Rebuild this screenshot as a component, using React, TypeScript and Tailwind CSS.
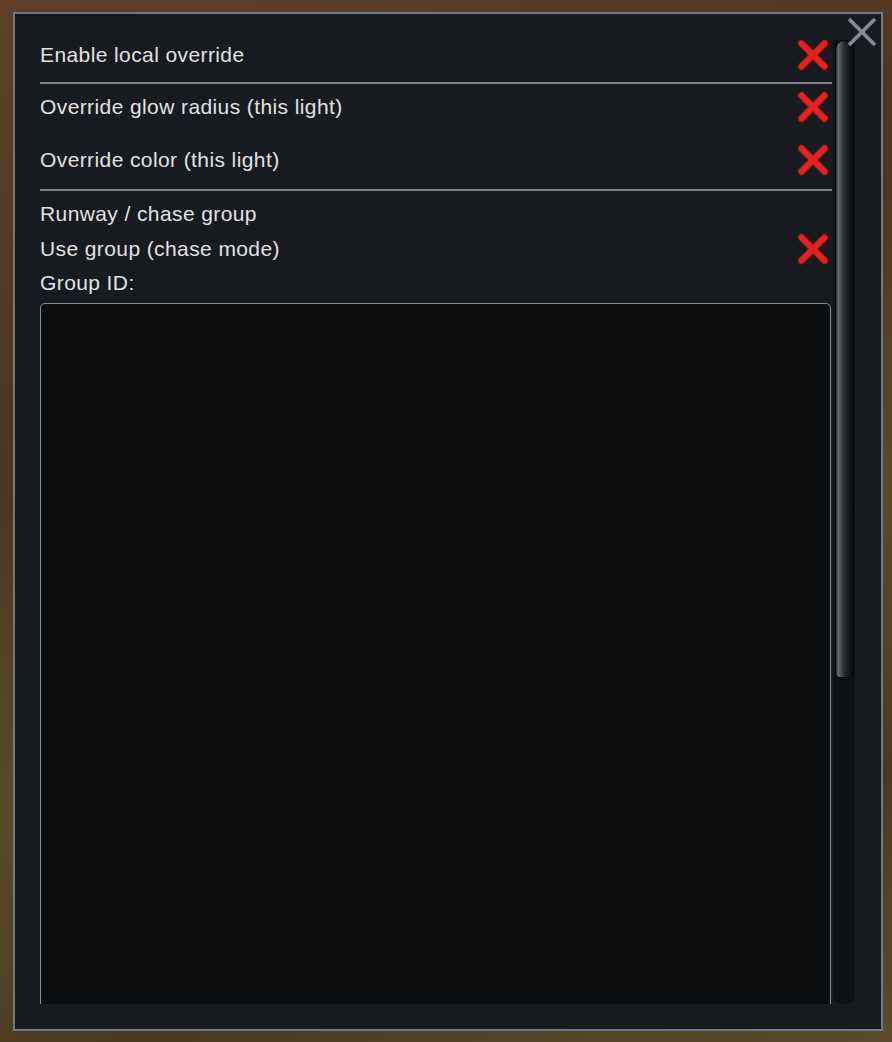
import React from "react";

function RedX() {
  return (
    <svg width="32" height="32" viewBox="0 0 32 32">
      <g strokeLinecap="round">
        <line x1="4.5" y1="4.5" x2="27.5" y2="27.5" stroke="#8f1414" strokeWidth="7.5" />
        <line x1="27.5" y1="4.5" x2="4.5" y2="27.5" stroke="#8f1414" strokeWidth="7.5" />
        <line x1="4.5" y1="4.5" x2="27.5" y2="27.5" stroke="#e02424" strokeWidth="5.5" />
        <line x1="27.5" y1="4.5" x2="4.5" y2="27.5" stroke="#e02424" strokeWidth="5.5" />
      </g>
    </svg>
  );
}

function CloseX() {
  return (
    <svg width="30" height="30" viewBox="0 0 30 30">
      <line x1="2" y1="2" x2="28" y2="28" stroke="#858c95" strokeWidth="3.6" />
      <line x1="28" y1="2" x2="2" y2="28" stroke="#858c95" strokeWidth="3.6" />
    </svg>
  );
}

function Row({ label, check, className }: { label: string; check?: boolean; className?: string }) {
  return (
    <div className={"flex h-[30px] shrink-0 items-center justify-between " + (className ?? "")}>
      <span>{label}</span>
      {check ? (
        <span className="mr-[3px] flex h-[32px] w-[32px] items-center justify-center">
          <RedX />
        </span>
      ) : null}
    </div>
  );
}

export default function App() {
  return (
    <div
      className="h-[1042px] w-[892px] overflow-hidden bg-[linear-gradient(160deg,#5e3f27_0%,#4f3520_35%,#5a4a2a_60%,#4b3a22_80%,#5c4a2c_100%)] pl-[13px] pt-[12px]"
      style={{ fontFamily: '"Liberation Sans", Arial, sans-serif' }}
    >
      <div className="relative h-[1019px] w-[870px] border-2 border-[#6f7986] bg-[#171a1f] pl-[25px] pt-[26px] text-[21px] tracking-[0.4px] text-[#e2e2e2]">
        <div className="absolute right-[4px] top-[3px]">
          <CloseX />
        </div>
        <div className="flex h-[964px] overflow-hidden">
          <div className="flex w-[792px] flex-col overflow-hidden">
            <Row label="Enable local override" check />
            <div className="mt-[12px] h-[2px] w-full shrink-0 bg-[#7e8288]" />
            <Row label="Override glow radius (this light)" check className="mt-[8px]" />
            <Row label="Override color (this light)" check className="mt-[23px]" />
            <div className="mt-[14px] h-[2px] w-full shrink-0 bg-[#7e8288]" />
            <Row label="Runway / chase group" className="mt-[8px]" />
            <Row label="Use group (chase mode)" check className="mt-[5px]" />
            <Row label="Group ID:" className="mt-[4px]" />
            <div className="mt-[5px] h-[1150px] w-[791px] shrink-0 rounded-t-[5px] border border-[#8a8e94] bg-[#0c0d0f]" />
          </div>
          <div className="ml-[1px] flex h-full w-[22px] shrink-0 justify-center rounded-b-[10px] bg-[#0e1014]">
            <div className="h-[638px] w-[19px] rounded-t-[10px] rounded-b-[5px] border border-[#050505] bg-[linear-gradient(to_right,#2a2b2d_0%,#6a6d71_15%,#45474a_30%,#232426_55%,#141516_80%,#0a0a0b_100%)]" />
          </div>
        </div>
      </div>
    </div>
  );
}
